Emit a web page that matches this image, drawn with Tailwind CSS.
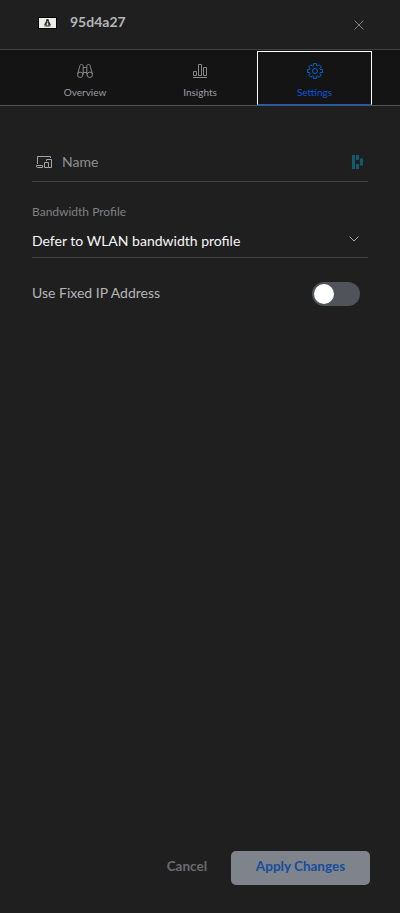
<!DOCTYPE html>
<html lang="en">
<head>
<meta charset="utf-8">
<title>Client settings</title>
<script src="https://cdn.jsdelivr.net/npm/@tailwindcss/browser@4"></script>
</head>
<body class="bg-[#1f1f1f]">
<div class="flex h-[913px] w-[400px] flex-col overflow-hidden bg-[#1f1f1f] font-['Lato',sans-serif] text-[14px] leading-5 text-[#b4b6b8]">
  <header class="flex h-[50px] shrink-0 items-start border-b border-[#424242] pl-[38px] pr-9">
    <svg class="mt-[17px] h-3 w-[19px] shrink-0" viewBox="0 0 19 12">
      <rect width="19" height="12" rx="1" fill="#050505"/>
      <rect x="1" y="1" width="17" height="10" fill="#ececec"/>
      <path d="M9.500 2c-1.200 0-1.500.9-1.400 2-.2 1.200-1.800 2.300-1.800 4.300l1 1.200h4.400l1-1.200c0-2-1.600-3.100-1.800-4.300.1-1.100-.2-2-1.400-2Z" fill="#292929"/>
      <path d="M9.500 5c-.7 1-1 2-.9 3.500h1.800c.1-1.500-.2-2.500-.9-3.500Z" fill="#dedede"/>
      <path d="M6 9.500 7.100 7.800l1.500 1.700zM10.400 9.500 11.900 7.800l1.100 1.700zM8.800 4h1.400v.8H8.800z" fill="#b89a35"/>
    </svg>
    <h1 class="ml-[13px] mt-[12px] flex-1 text-[14px] font-bold leading-5">95d4a27</h1>
    <svg class="mt-5 size-[10px]" viewBox="0 0 10 10" fill="none" stroke="#808080" stroke-width="1"><path d="m.5.5 9 9m0-9-9 9"/></svg>
  </header>

  <nav class="flex h-[56px] shrink-0 border-b border-[#50535a] bg-[#141414] pl-[27px] pr-7 text-[10px] leading-4">
    <a class="flex w-[116px] flex-col items-center pt-[13px] text-[#9c9ea1]">
      <svg class="size-4" viewBox="0 0 16 16" fill="none" stroke="#888" stroke-width="1">
        <circle cx="3.2" cy="11.8" r="2.7"/><circle cx="12.8" cy="11.8" r="2.7"/>
        <path d="M.6 11 2.700 3.500c.2-1.600.5-2 1.700-2 1.300 0 1.800.5 1.800 1.700v8.300M15.400 11l-2.100-7.500c-.2-1.600-.5-2-1.700-2-1.300 0-1.800.5-1.800 1.700v8.300M6.200 4.500h3.600M6.200 9.500h3.600"/>
      </svg>
      <span class="mt-[5px]">Overview</span>
    </a>
    <a class="flex w-[114px] flex-col items-center pt-[13px] text-[#9c9ea1]">
      <svg class="size-4" viewBox="0 0 16 16" fill="none" stroke="#888" stroke-width="1">
        <path d="M1.500 12.500v-4h3v4zM6.500 12.500v-11h3v11zM11.500 12.500v-8h3v8zM1 14.500h14"/>
      </svg>
      <span class="mt-[5px]">Insights</span>
    </a>
    <a class="mt-px flex h-[54px] w-[115px] flex-col items-center border border-white border-b-[#0b62dc] pt-[11px] text-[#0d55dd]">
      <svg class="size-4" viewBox="0 0 16 16" fill="none" stroke="#0666d6" stroke-width="1" stroke-linejoin="round">
        <circle cx="8" cy="8" r="2.5"/>
        <path d="M6.500.6h3v2l1.200.5 1.500-1.400 2.100 2.100-1.400 1.500.5 1.200h2v3h-2l-.5 1.200 1.400 1.500-2.100 2.100-1.500-1.400-1.200.5v2h-3v-2l-1.200-.5-1.500 1.400-2.100-2.100 1.400-1.500-.5-1.200h-2v-3h2l.5-1.200-1.400-1.500 2.100-2.100 1.500 1.400 1.200-.5z"/>
      </svg>
      <span class="mt-[5px]">Settings</span>
    </a>
  </nav>

  <main class="flex flex-1 flex-col px-8 pt-[46px]">
    <label class="flex h-[30px] items-start border-b border-[#424242] pl-1 pr-1">
      <svg class="mt-[3px] h-[14px] w-4" viewBox="0 0 16 14" fill="none" stroke="#a5a5a5" stroke-width="1">
        <path d="M1.500 9V1.500h13V3M.5 10.500h6v2h-5q-1 0-1-1zM10.500 6V4.500h5v8h-3"/>
        <path d="M8.500 7.500h4v5h-4z"/>
      </svg>
      <span class="ml-[10px] flex-1 text-[#8e8f91]">Name</span>
      <svg class="mt-[2px] h-4 w-3" viewBox="0 0 12 16" fill="#115c6c">
        <path d="M0 1h3v14H0zM4 1h3v5H4zM4 10h3v5H4zM8 4.500h3v7H8z"/>
      </svg>
    </label>
    <div class="mt-5 text-[12px] leading-5 text-[#808183]">Bandwidth Profile</div>
    <div class="flex h-[36px] items-start justify-between border-b border-[#424242] pr-[9px] pt-[9px] text-[#f7f7f8]">
      <span>Defer to WLAN bandwidth profile</span>
      <svg class="mt-[5px] h-[6px] w-[10px]" viewBox="0 0 10 6" fill="none" stroke="#aaa" stroke-width="1"><path d="m.5.5 4.500 4.500 4.500-4.500"/></svg>
    </div>
    <div class="mt-6 flex h-6 items-start justify-between pr-2">
      <span class="mt-px">Use Fixed IP Address</span>
      <span class="flex h-6 w-12 items-center rounded-full bg-[#50535a] px-[2px]"><span class="size-5 rounded-full bg-white"></span></span>
    </div>
  </main>

  <footer class="flex h-[62px] shrink-0 items-start justify-end pr-[30px] text-[13.500px] font-bold">
    <button class="h-[34px] px-6 pb-[4px] text-[#6b6c6d]">Cancel</button>
    <button class="h-[34px] w-[139px] rounded-[5px] bg-[#7f838c] pb-[4px] text-[#164d9b]">Apply Changes</button>
  </footer>
</div>
</body>
</html>
